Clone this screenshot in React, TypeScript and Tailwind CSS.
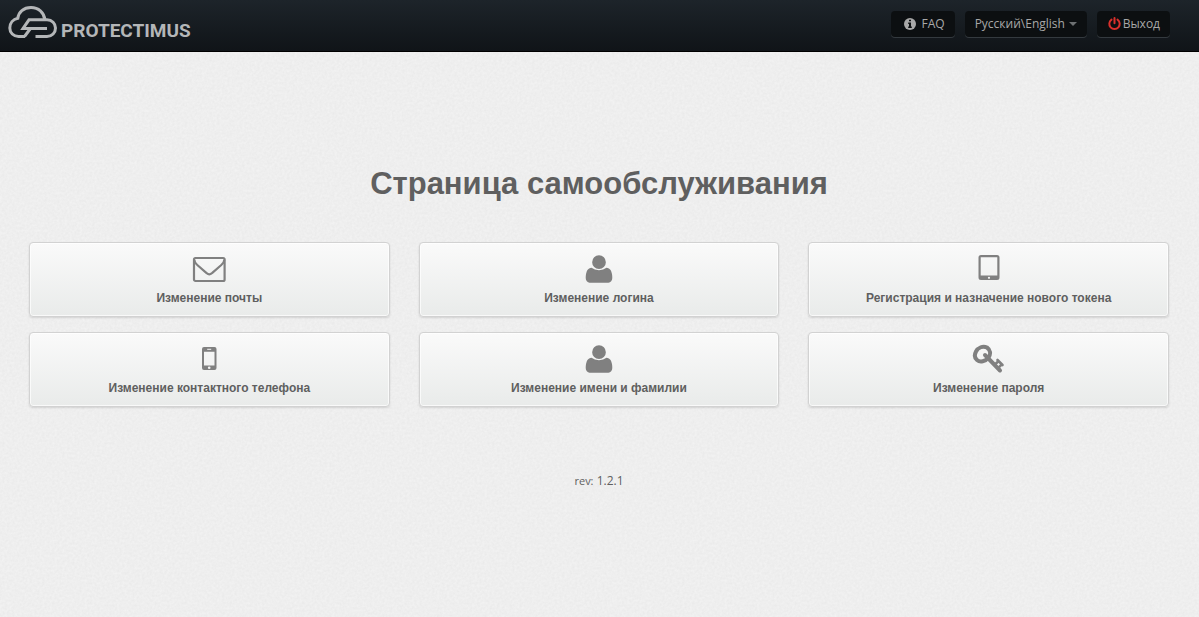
import type { ReactNode } from "react"

function CloudLogo() {
  return (
    <svg width="50" height="34" viewBox="0 0 50 34" fill="none" stroke="#b4b6b8" strokeWidth="3" aria-hidden="true">
      <path d="M17 31.500H10.500C5.500 31.500 1.800 27.800 1.800 23C1.800 18 5 14.300 9.800 13.300C10.500 7 15.500 2.500 23 2.500C30.500 2.500 36 7.500 36.800 14.500" />
      <path d="M16.500 31.500L22.500 23.500H15L21 14.800H39C44 14.800 47.500 18.500 47.500 23C47.500 27.800 44 31.500 39 31.500H27.500" />
      <path d="M22.500 23.500H39" />
    </svg>
  )
}

function InfoIcon() {
  return (
    <svg width="12" height="12" viewBox="0 0 12 12" aria-hidden="true">
      <circle cx="6" cy="6" r="6" fill="#a8a8a8" />
      <path d="M5 1.700h2v1.600H5zM4.200 4.500H7v4h.8v1.400H4.200V8.500H5V5.900h-.8z" fill="#0c0f11" />
    </svg>
  )
}

function PowerIcon() {
  return (
    <svg width="13" height="14" viewBox="0 0 13 14" fill="none" stroke="#d9302c" strokeWidth="2" strokeLinecap="round" aria-hidden="true">
      <path d="M3.500 2.600a5.200 5.200 0 1 0 6 0M6.500 1v5.200" />
    </svg>
  )
}

function MailIcon() {
  return (
    <svg width="34" height="32" viewBox="0 0 34 32" fill="none" stroke="#808080" strokeWidth="2.200" aria-hidden="true">
      <rect x="2" y="5" width="30.600" height="23" rx="1.500" />
      <path d="M2.300 6.800C2.300 9.300 3.800 10.800 5.300 12L14.300 19.800C16.800 21.800 17.800 21.800 20.300 19.800L29.300 12C30.800 10.800 32.300 9.300 32.300 6.800" />
    </svg>
  )
}

function UserIcon() {
  return (
    <svg width="34" height="32" viewBox="0 0 1792 1792" fill="#808080" aria-hidden="true">
      <path d="M1640 1399q0 109-62.500 187t-150.500 78h-1062q-88 0-150.500-78t-62.500-187q0-85 8.500-160.500t31.500-152 58.500-131 94-89 134.500-34.500q165 128 417 128t417-128q76 0 134.500 34.500t94 89 58.500 131 31.500 152 8.500 160.500zm-360-887q0 159-112.500 271.500t-271.500 112.500-271.500-112.500-112.500-271.500 112.500-271.500 271.500-112.500 271.500 112.500 112.500 271.500z" />
    </svg>
  )
}

function TabletIcon() {
  return (
    <svg width="34" height="32" viewBox="0 0 34 32" aria-hidden="true">
      <path fill="#808080" fillRule="evenodd" d="M9 2h16a2.500 2.500 0 0 1 2.500 2.500v20A2.500 2.500 0 0 1 25 27H9a2.500 2.500 0 0 1-2.500-2.500v-20A2.500 2.500 0 0 1 9 2zm-.3 2.200v18.300h16.600V4.200z" />
      <circle cx="17" cy="24.800" r="1.100" fill="#f5f5f5" />
    </svg>
  )
}

function PhoneIcon() {
  return (
    <svg width="34" height="32" viewBox="0 0 34 32" aria-hidden="true">
      <path fill="#808080" fillRule="evenodd" d="M12 4h10.500a2 2 0 0 1 2 2v19a2 2 0 0 1-2 2H12a2 2 0 0 1-2-2V6a2 2 0 0 1 2-2zm0 4.800v13.700h10.500V8.800z" />
      <path d="M15.200 6.300h4" stroke="#f5f5f5" />
      <circle cx="17.200" cy="24.700" r="1.300" fill="#f5f5f5" />
    </svg>
  )
}

function KeyIcon() {
  return (
    <svg width="34" height="32" viewBox="0 0 34 32" aria-hidden="true">
      <g fill="none" stroke="#808080" strokeLinecap="round">
        <path d="M4 8.500C6 4.500 11 2.500 15 4.500C18.500 7 19 11 16.500 14.500C13.500 18.500 8 19.500 5 17C2.500 15 2.500 11.500 4 8.500Z" strokeWidth="4" />
        <path d="M13 12L28 27.500" strokeWidth="4" />
        <path d="M23 21.500L26.500 18M26.300 24.800L29.800 21.300M25.500 17l5 5" strokeWidth="2.600" />
      </g>
    </svg>
  )
}

type Action = {
  label: string
  icon: ReactNode
}

const actions: Action[] = [
  { label: "Изменение почты", icon: <MailIcon /> },
  { label: "Изменение логина", icon: <UserIcon /> },
  { label: "Регистрация и назначение нового токена", icon: <TabletIcon /> },
  { label: "Изменение контактного телефона", icon: <PhoneIcon /> },
  { label: "Изменение имени и фамилии", icon: <UserIcon /> },
  { label: "Изменение пароля", icon: <KeyIcon /> },
]

const navItem =
  "flex h-[26px] items-center rounded bg-[#0c0f11] text-xs text-[#a8a8a8] shadow-[0_1px_0_#343a3f]"

function Header() {
  return (
    <header className="flex h-13 items-start justify-between border-b border-black bg-linear-to-b from-[#1d242a] to-[#101418] pr-[29px] pl-2">
      <a href="#" className="flex items-end pt-[5px] text-[#b4b6b8]">
        <CloudLogo />
        <span className="pl-[3px] font-[Roboto] text-[19px] leading-4 font-bold">PROTECTIMUS</span>
      </a>
      <nav className="flex gap-[10px] pt-[11px]">
        <a href="#" className={`${navItem} gap-[6px] pr-[10px] pl-[13px]`}>
          <InfoIcon />
          FAQ
        </a>
        <div className="relative flex items-center">
          <select aria-label="Язык" className={`${navItem} w-[122px] appearance-none pl-[10px] outline-none`}>
            <option>Русский\English</option>
          </select>
          <svg className="pointer-events-none absolute right-[10px]" width="8" height="4" viewBox="0 0 8 4" aria-hidden="true">
            <path d="M0 0h8L4 4z" fill="#6d7072" />
          </svg>
        </div>
        <a href="#" className={`${navItem} gap-[2px] pr-[10px] pl-[11px]`}>
          <PowerIcon />
          Выход
        </a>
      </nav>
    </header>
  )
}

export default function App() {
  return (
    <div className="relative isolate min-h-screen bg-[#f2f2f2] font-['Open_Sans',sans-serif] text-[#5f5f5f]">
      {/* paper grain */}
      <svg className="absolute inset-0 -z-10 h-full w-full opacity-4" aria-hidden="true">
        <filter id="grain" colorInterpolationFilters="sRGB">
          <feTurbulence type="fractalNoise" baseFrequency="0.4" numOctaves="3" />
          <feColorMatrix values="1 0 0 0 0.150  1 0 0 0 0.150  1 0 0 0 0.150  0 0 0 0 1" />
        </filter>
        <rect width="100%" height="100%" filter="url(#grain)" />
      </svg>
      <Header />
      <main className="pt-28 pr-[30px] pl-[29px] text-center">
        <h1 className="font-['Liberation_Sans',sans-serif] text-[31px] leading-10 font-bold">
          Страница самообслуживания
        </h1>
        <div className="mt-[38px] grid grid-cols-3 gap-x-[29px] gap-y-[15px]">
          {actions.map((action) => (
            <button
              key={action.label}
              type="button"
              className="flex h-[75px] cursor-pointer flex-col items-center rounded border border-[#d2d2d2] bg-linear-to-b from-[#fafafa] to-[#e9ebea] pt-[10px] font-['Liberation_Sans',sans-serif] text-xs font-bold shadow-[inset_0_0_0_1px_rgba(255,255,255,0.7),0_1px_2px_rgba(0,0,0,0.12)]"
            >
              {action.icon}
              <span className="mt-[5px]">{action.label}</span>
            </button>
          ))}
        </div>
        <p className="mt-16 text-xs leading-5">
          <span className="text-[11px]">rev:</span> 1.2.1
        </p>
      </main>
    </div>
  )
}
